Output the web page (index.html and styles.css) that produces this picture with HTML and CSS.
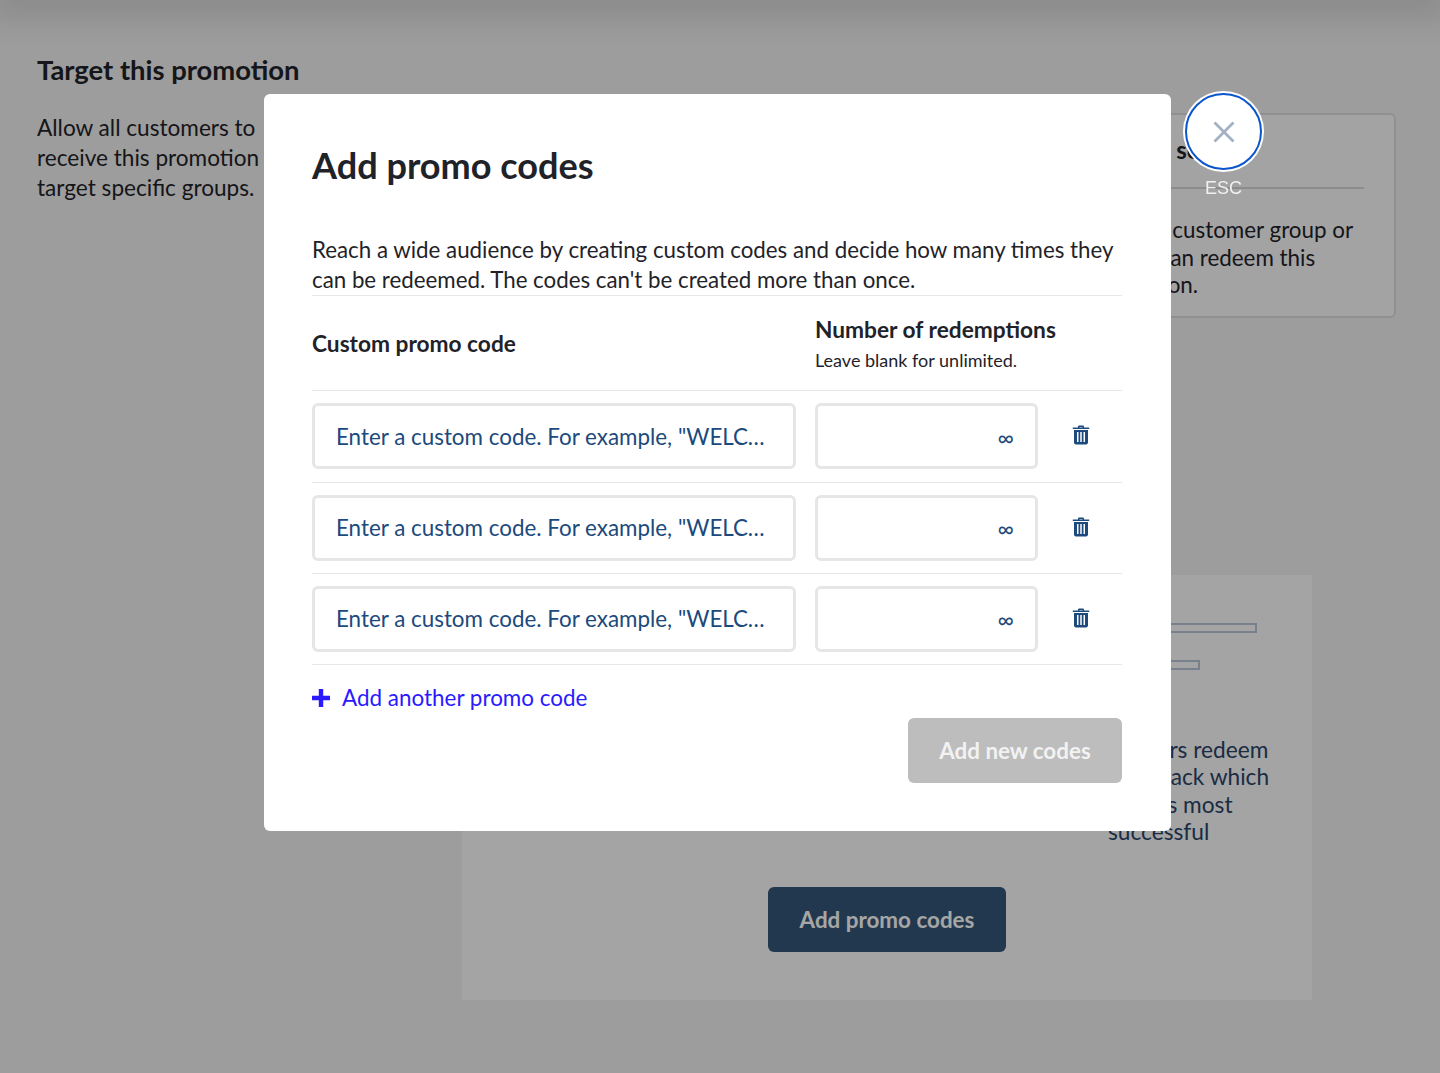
FILE: index.html
```html
<!DOCTYPE html>
<html lang="en">
<head>
  <meta charset="UTF-8">
  <meta name="viewport" content="width=device-width, initial-scale=1.0">
  <title>Add promo codes</title>
  <link rel="stylesheet" href="styles.css">
</head>
<body>
  <div class="topbar"></div>

  <div class="target-section">
    <div class="target-intro">
      <h2>Target this promotion</h2>
      <p>Allow all customers to receive this promotion or target specific groups.</p>
    </div>

    <div class="target-main">
      <div class="segment-card">
        <h3>Choose set</h3>
        <p>Select a customer group or<br>so you can redeem this<br>promotion.</p>
      </div>

      <div class="codes-panel">
        <div class="codes-step">
          <div class="step-bar step-bar-long"></div>
          <div class="step-bar step-bar-short"></div>
          <p>Readers redeem<br>And track which<br>code is most<br>successful</p>
        </div>
        <button class="panel-button" type="button">Add promo codes</button>
      </div>
    </div>
  </div>

  <div class="overlay">
    <div class="modal">
      <h1>Add promo codes</h1>
      <p class="modal-intro">Reach a wide audience by creating custom codes and decide how many times they can be redeemed. The codes can't be created more than once.</p>

      <div class="code-head">
        <div class="col-code"><strong>Custom promo code</strong></div>
        <div class="col-count">
          <strong>Number of redemptions</strong>
          <small>Leave blank for unlimited.</small>
        </div>
      </div>

      <div class="code-row">
        <input class="col-code code-input" type="text" placeholder="Enter a custom code. For example, &quot;WELCOME10&quot;">
        <input class="col-count count-input" type="text" placeholder="∞">
        <button class="trash" type="button" aria-label="Delete">
          <svg width="18" height="20" viewBox="0 0 18 20"><path d="M6 2.600V1.800C6 1 6.600.5 7.400.5h3.200c.8 0 1.400.5 1.400 1.300v.8h5.200v1.500H.8V2.600zM7.500 2.600h3v-.7h-3z" fill="#1c4a7c" fill-rule="evenodd"/><path d="M2 5h14v12.500c0 1.100-.8 1.900-1.900 1.900H3.900c-1.100 0-1.900-.8-1.900-1.900zM5 7v10h1.500V7zm3.250 0v10h1.500V7zM11.500 7v10H13V7z" fill="#1c4a7c" fill-rule="evenodd"/></svg>
        </button>
      </div>

      <div class="code-row">
        <input class="col-code code-input" type="text" placeholder="Enter a custom code. For example, &quot;WELCOME10&quot;">
        <input class="col-count count-input" type="text" placeholder="∞">
        <button class="trash" type="button" aria-label="Delete">
          <svg width="18" height="20" viewBox="0 0 18 20"><path d="M6 2.600V1.800C6 1 6.600.5 7.400.5h3.200c.8 0 1.400.5 1.400 1.300v.8h5.200v1.500H.8V2.600zM7.500 2.600h3v-.7h-3z" fill="#1c4a7c" fill-rule="evenodd"/><path d="M2 5h14v12.500c0 1.100-.8 1.900-1.900 1.900H3.900c-1.100 0-1.900-.8-1.900-1.900zM5 7v10h1.500V7zm3.250 0v10h1.500V7zM11.500 7v10H13V7z" fill="#1c4a7c" fill-rule="evenodd"/></svg>
        </button>
      </div>

      <div class="code-row">
        <input class="col-code code-input" type="text" placeholder="Enter a custom code. For example, &quot;WELCOME10&quot;">
        <input class="col-count count-input" type="text" placeholder="∞">
        <button class="trash" type="button" aria-label="Delete">
          <svg width="18" height="20" viewBox="0 0 18 20"><path d="M6 2.600V1.800C6 1 6.600.5 7.400.5h3.200c.8 0 1.400.5 1.400 1.300v.8h5.200v1.500H.8V2.600zM7.500 2.600h3v-.7h-3z" fill="#1c4a7c" fill-rule="evenodd"/><path d="M2 5h14v12.500c0 1.100-.8 1.900-1.900 1.900H3.900c-1.100 0-1.900-.8-1.900-1.900zM5 7v10h1.500V7zm3.250 0v10h1.500V7zM11.500 7v10H13V7z" fill="#1c4a7c" fill-rule="evenodd"/></svg>
        </button>
      </div>

      <a class="add-link" href="#">
        <svg width="18" height="18" viewBox="0 0 18 18"><path d="M6.800 0h4.400v6.800H18v4.400h-6.800V18H6.800v-6.800H0V6.800h6.800z" fill="#2a1aff"/></svg>
        Add another promo code
      </a>

      <div class="modal-actions">
        <button class="submit" type="button">Add new codes</button>
      </div>

      <div class="close-wrap">
        <button class="close" type="button" aria-label="Close">
          <svg width="22" height="22" viewBox="0 0 22 22"><path d="M1.500 1.500l19 19M20.500 1.500l-19 19" stroke="#a3b1c4" stroke-width="2.800" fill="none"/></svg>
        </button>
        <span>ESC</span>
      </div>
    </div>
  </div>
</body>
</html>
```

FILE: styles.css
```css
* {
  box-sizing: border-box;
}
body {
  font-family: 'Lato', sans-serif;
  background: #f1f1f1;
  color: #1f2329;
  margin: 0;
  height: 1073px;
  overflow: hidden;
}
.topbar {
  height: 0;
  box-shadow: 0 0 34px 14px rgba(0,0,0,0.16);
}
.target-section {
  display: flex;
  padding: 52px 44px 0 37px;
}
.target-intro {
  width: 262px;
  margin-right: 163px;
  flex: none;
}
.target-intro h2 {
  font-size: 27.400px;
  line-height: 36px;
  font-weight: 700;
  margin: 0 0 25px;
  white-space: nowrap;
}
.target-intro p {
  font-size: 22.600px;
  line-height: 30px;
  margin: 0;
}
.target-main {
  flex: 1;
  padding-top: 61px;
}
.segment-card {
  width: 338px;
  height: 205px;
  margin-left: auto;
  padding: 21px 30px;
  background: #fbfbfb;
  border: 2px solid #dedede;
  border-radius: 6px;
}
.segment-card h3 {
  font-size: 24px;
  line-height: 28px;
  margin: 0 0 23px;
}
.segment-card p {
  font-size: 22.400px;
  line-height: 27.500px;
  margin: 0;
  padding-top: 27px;
  border-top: 2px solid #d8d8d8;
}
.codes-panel {
  width: 850px;
  height: 425px;
  margin-top: 257px;
  padding-top: 48px;
  background: #fcfcfc;
}
.codes-step {
  margin-left: 646px;
  height: 264px;
}
.codes-step p {
  font-size: 22.700px;
  line-height: 27.300px;
  color: #2a4468;
  margin: 66px 0 0;
}
.step-bar {
  height: 10px;
  border: 2px solid #b9c6d6;
}
.step-bar-long {
  width: 149px;
  margin-bottom: 27px;
}
.step-bar-short {
  width: 92px;
}
.panel-button {
  display: block;
  width: 238px;
  height: 65px;
  margin: 0 auto;
  background: #345679;
  color: #fff;
  border: none;
  border-radius: 6px;
  font-family: inherit;
  font-size: 22.400px;
  font-weight: 700;
}
.overlay {
  position: fixed;
  top: 0;
  left: 0;
  width: 100%;
  height: 100%;
  background: rgba(0,0,0,0.35);
  padding: 94px 0 0 264px;
}
.modal {
  position: relative;
  width: 907px;
  height: 737px;
  padding: 47px 49px 0 48px;
  background: #fff;
  border-radius: 6px;
}
.modal h1 {
  font-size: 36.100px;
  line-height: 48px;
  font-weight: 700;
  margin: 0 0 46px;
}
.modal-intro {
  font-size: 22.300px;
  line-height: 30px;
  margin: 0;
  border-bottom: 1px solid #e6e6e6;
}
.code-head {
  display: flex;
  align-items: center;
  height: 95.400px;
  border-bottom: 1px solid #e6e6e6;
  font-size: 22.700px;
}
.col-code {
  width: 484px;
  margin-right: 19px;
  flex: none;
}
.col-count {
  width: 223px;
  flex: none;
}
.code-head strong {
  white-space: nowrap;
}
.code-head small {
  display: block;
  font-size: 18px;
  margin-top: 6px;
}
.code-row {
  display: flex;
  align-items: center;
  height: 91.200px;
  border-bottom: 1px solid #e6e6e6;
}
.code-input,
.count-input {
  height: 66px;
  border: 3px solid #e6e6e6;
  border-radius: 6px;
  background: #fff;
  font-family: inherit;
  font-size: 22.400px;
  color: #1c4a7c;
  outline: none;
}
.code-input {
  padding: 0 27px 0 21px;
  text-overflow: ellipsis;
}
.count-input {
  padding: 2px 21px 0;
  text-align: right;
}
.code-input::placeholder,
.count-input::placeholder {
  color: #1c4a7c;
  opacity: 1;
}
.trash {
  width: 18px;
  height: 20px;
  margin: 0 0 2px 34px;
  padding: 0;
  border: none;
  background: none;
}
.add-link {
  display: flex;
  align-items: center;
  gap: 12px;
  margin-top: 19px;
  font-size: 22.450px;
  line-height: 28px;
  color: #2a1aff;
  text-decoration: none;
}
.modal-actions {
  display: flex;
  justify-content: flex-end;
  margin-top: 6px;
}
.submit {
  width: 214px;
  height: 65px;
  background: #bdbdbd;
  color: #f2f2f2;
  border: none;
  border-radius: 6px;
  font-family: inherit;
  font-size: 22.400px;
  font-weight: 700;
}
.close-wrap {
  position: absolute;
  top: -3px;
  left: 919px;
  width: 81px;
  text-align: center;
  color: #f0f0f0;
  font-family: 'Liberation Sans', sans-serif;
  font-size: 18px;
  line-height: 20px;
}
.close {
  display: flex;
  align-items: center;
  justify-content: center;
  width: 77px;
  height: 77px;
  margin: 2px 2px 8px;
  padding: 0;
  background: #fff;
  border: 2.500px solid #0a55cc;
  border-radius: 50%;
  box-shadow: 0 0 0 2px #fff;
}
```
